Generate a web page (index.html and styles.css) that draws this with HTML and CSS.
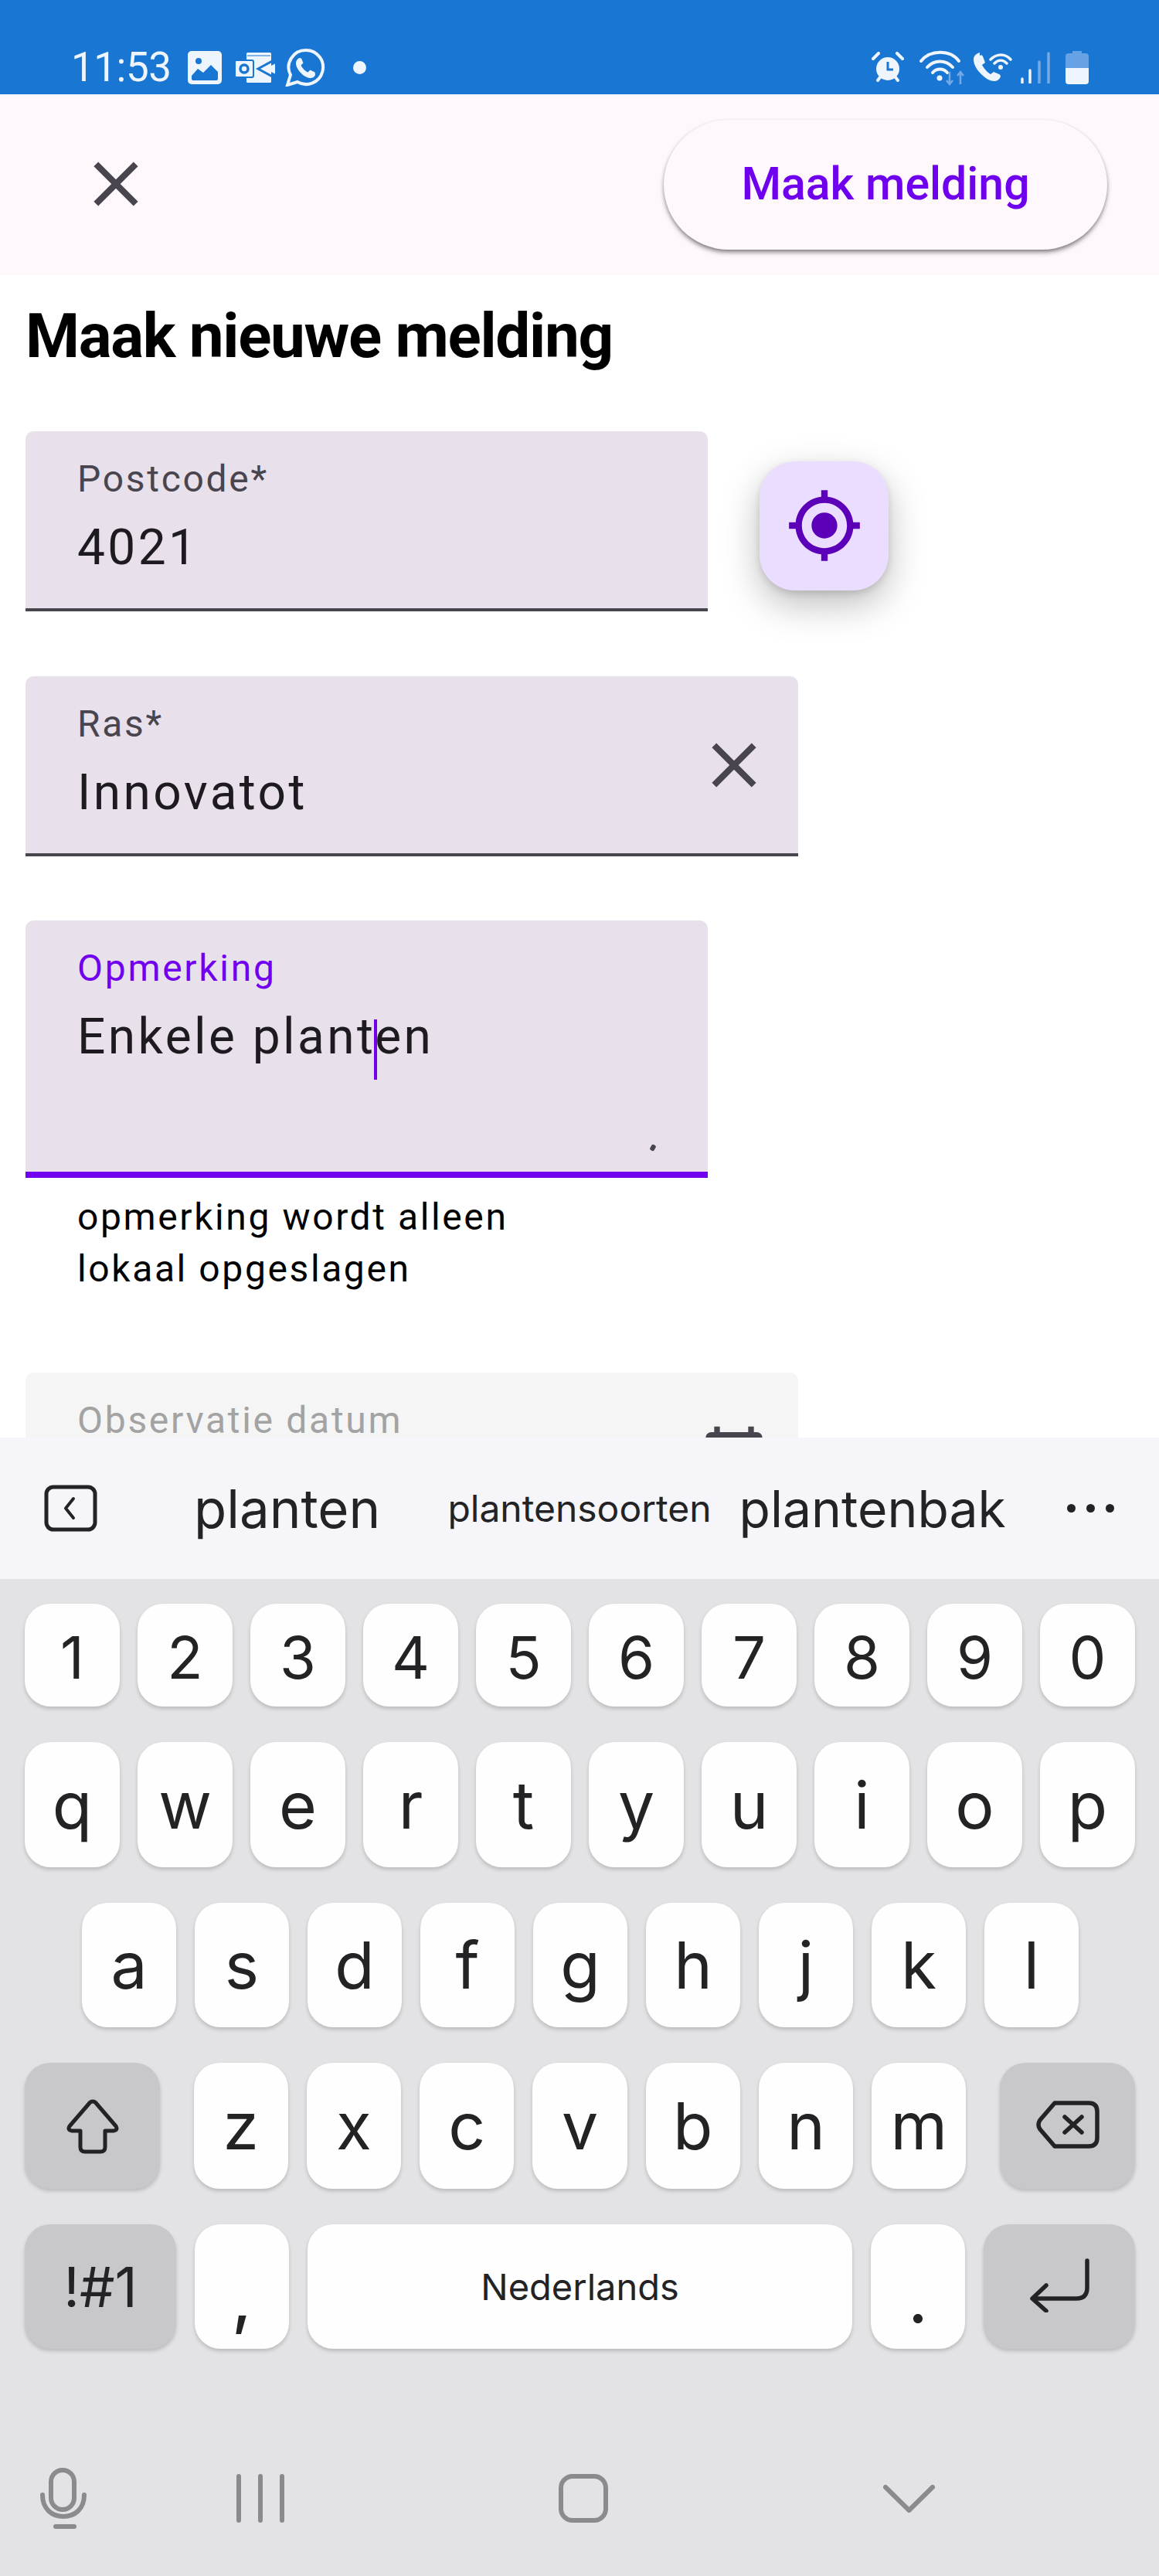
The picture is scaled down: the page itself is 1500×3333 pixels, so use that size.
FILE: index.html
```html
<!DOCTYPE html>
<html lang="nl">
<head>
    <meta charset="UTF-8">
    <meta name="viewport" content="width=device-width, initial-scale=1.0">
    <title>Maak nieuwe melding</title>

    <link rel="stylesheet" href="styles.css">
</head>
<body>

    <div class="phone">
        <!-- Status bar -->
        <div class="status-bar">
            <div class="status-left">
                <span class="clock">11:53</span>
                <svg class="ic-image" viewBox="0 0 44 43"><rect width="44" height="43" rx="5" fill="#eef5fc"/><circle cx="14" cy="13" r="4" fill="#1976d2"/><path d="M5 32 L13 23 L20 28 L30 18 L39 27 V36 Q39 38 37 38 H7 Q5 38 5 36z" fill="#1976d2"/></svg>
                <svg class="ic-outlook" viewBox="0 0 51 39"><rect x="14" y="0" width="32" height="39" rx="1.500" fill="#eef5fc"/><path d="M15 4 H45" stroke="#1976d2" stroke-width="1"/><path d="M51 9 L29 21 L51 33" fill="none" stroke="#1976d2" stroke-width="3"/><path d="M38 21 L51 14.500 V27.500z" fill="#eef5fc"/><path d="M46 0 H51 V9 L46 11z M46 31 L51 33 V39 H46z" fill="#1976d2"/><rect x="-1" y="10" width="24" height="22" rx="2" fill="#eef5fc" stroke="#1976d2" stroke-width="2"/><circle cx="11" cy="21" r="5" fill="none" stroke="#1976d2" stroke-width="3.500"/></svg>
                <svg class="ic-whatsapp" viewBox="0 0 52 50"><path d="M27 3 a22 22 0 1 1 -11 41 L3 48 L7 35 A22 22 0 0 1 27 3z" fill="none" stroke="#eef5fc" stroke-width="4"/><path d="M19 13 c-2 0-5 3-5 7 c0 5 4 10 7 13 c4 4 9 6 12 6 c4 0 6-3 6-5 l-.5-2.500 -6-3 -3 3 c-3-1-7-5-9-9 l3-3 -2.500-6z" fill="#eef5fc"/></svg>
                <span class="status-dot"></span>
            </div>
            <div class="status-right">
                <svg class="ic-alarm" viewBox="0 0 42 40"><circle cx="21" cy="22" r="15" fill="#eef5fc"/><path d="M21 13 V23 H28" fill="none" stroke="#1976d2" stroke-width="3"/><path d="M2 9 L9 2 M40 9 L33 2 M8 37 L11 33 M34 37 L31 33" stroke="#eef5fc" stroke-width="4" stroke-linecap="round"/></svg>
                <svg class="ic-wifi" viewBox="0 0 62 46"><path d="M3 14 C15 -1 41 -1 52 14 M11 22 C20 12 35 12 44 22 M18 29 C23 23 32 23 37 29" fill="none" stroke="#eef5fc" stroke-width="4" stroke-linecap="round"/><circle cx="27" cy="36" r="3.500" fill="#eef5fc"/><path d="M40 28 V44 M36 39 L40 44 L44 39" fill="none" stroke="#75a9e4" stroke-width="2.500"/><path d="M54 44 V28 M50 33 L54 28 L58 33" fill="none" stroke="#75a9e4" stroke-width="2.500"/></svg>
                <svg class="ic-wificall" viewBox="0 0 50 38"><path d="M8 0 c-4 1-8 4-8 9 c0 7 5 14 10 19 c5 5 11 9 17 9 c4 0 7-3 8-6 c0-1-1-3-2-3 l-7-3 -4 3 c-4-2-9-8-11-12 l4-3 -3-8 c-1-2-2-2-4-1z" fill="#eef5fc"/><path d="M22 9 C30 1 41 1 48 9 M27 14 C32 9 38 9 43 14" fill="none" stroke="#eef5fc" stroke-width="3.500" stroke-linecap="round"/><circle cx="35" cy="19" r="3" fill="#eef5fc"/></svg>
                <svg class="ic-signal" viewBox="0 0 38 41"><path d="M2 40 V35" stroke="#eef5fc" stroke-width="3.500" stroke-linecap="round"/><path d="M12 40 V24" stroke="#eef5fc" stroke-width="3.500" stroke-linecap="round"/><path d="M24 40 V13 M36 40 V2" stroke="#75a9e4" stroke-width="3.500" stroke-linecap="round"/></svg>
                <svg class="ic-battery" viewBox="0 0 30 43"><path d="M9 0 H21 V3 H26 Q30 3 30 7 V22 H0 V7 Q0 3 4 3 H9z" fill="#66a2e4"/><path d="M0 22 H30 V39 Q30 43 26 43 H4 Q0 43 0 39z" fill="#eef5fc"/></svg>
            </div>
        </div>

        <!-- Top bar -->
        <div class="app-bar">
            <svg class="ic-close" viewBox="0 0 24 24"><path d="M19 6.410L17.590 5 12 10.590 6.410 5 5 6.410 10.590 12 5 17.590 6.410 19 12 13.410 17.590 19 19 17.590 13.410 12z"/></svg>
            <button class="submit-btn">Maak melding</button>
        </div>

        <!-- Form -->
        <div class="content">
            <h2 class="title">Maak nieuwe melding</h2>

            <div class="postcode-row">
                <div class="field">
                    <div class="field-text">
                        <div class="field-label">Postcode*</div>
                        <div class="field-value">4021</div>
                    </div>
                </div>
                <button class="location-btn">
                    <svg viewBox="0 0 24 24"><path d="M12 8c-2.210 0-4 1.790-4 4s1.790 4 4 4 4-1.790 4-4-1.790-4-4-4zm8.940 3c-.46-4.170-3.770-7.480-7.940-7.940V1h-2v2.060C6.830 3.520 3.520 6.830 3.060 11H1v2h2.060c.46 4.170 3.770 7.480 7.940 7.940V23h2v-2.060c4.170-.46 7.480-3.770 7.940-7.940H23v-2h-2.060zM12 19c-3.870 0-7-3.130-7-7s3.130-7 7-7 7 3.130 7 7-3.130 7-7 7z"/></svg>
                </button>
            </div>

            <div class="field field-wide">
                <div class="field-text">
                    <div class="field-label">Ras*</div>
                    <div class="field-value">Innovatot</div>
                </div>
                <svg class="ic-close" viewBox="0 0 24 24"><path d="M19 6.410L17.590 5 12 10.590 6.410 5 5 6.410 10.590 12 5 17.590 6.410 19 12 13.410 17.590 19 19 17.590 13.410 12z"/></svg>
            </div>

            <div class="field field-focus">
                <div class="field-text">
                    <div class="field-label">Opmerking</div>
                    <div class="field-value">Enkele plant<span class="caret"></span>en</div>
                </div>
                <span class="resize-mark"></span>
            </div>
            <div class="helper">opmerking wordt alleen<br>lokaal opgeslagen</div>

            <div class="field field-wide field-disabled">
                <div class="field-text">
                    <div class="field-label">Observatie datum</div>
                </div>
                <svg class="ic-calendar" viewBox="0 0 24 24"><path d="M20 3h-1V1h-2v2H7V1H5v2H4c-1.100 0-2 .9-2 2v16c0 1.100.9 2 2 2h16c1.100 0 2-.9 2-2V5c0-1.100-.9-2-2-2zm0 18H4V8h16v13z"/></svg>
            </div>
        </div>

        <!-- Keyboard -->
        <div class="keyboard">
            <div class="suggestions">
                <svg class="ic-back" viewBox="0 0 69 61"><rect x="3" y="3" width="63" height="55" rx="9" fill="none" stroke="#232325" stroke-width="5"/><path d="M38 18 L28 30.500 L38 43" fill="none" stroke="#232325" stroke-width="4" stroke-linecap="round" stroke-linejoin="round"/></svg>
                <span class="sug sug-1">planten</span>
                <span class="sug sug-2">plantensoorten</span>
                <span class="sug sug-3">plantenbak</span>
                <span class="sug-more"><i></i><i></i><i></i></span>
            </div>

            <div class="keys">
                <div class="key-row row-num">
                    <div class="key">1</div><div class="key">2</div><div class="key">3</div><div class="key">4</div><div class="key">5</div><div class="key">6</div><div class="key">7</div><div class="key">8</div><div class="key">9</div><div class="key">0</div>
                </div>
                <div class="key-row row-top">
                    <div class="key">q</div><div class="key">w</div><div class="key">e</div><div class="key">r</div><div class="key">t</div><div class="key">y</div><div class="key">u</div><div class="key">i</div><div class="key">o</div><div class="key">p</div>
                </div>
                <div class="key-row row-home">
                    <div class="key">a</div><div class="key">s</div><div class="key">d</div><div class="key">f</div><div class="key">g</div><div class="key">h</div><div class="key">j</div><div class="key">k</div><div class="key">l</div>
                </div>
                <div class="key-row row-shift">
                    <div class="key key-fn key-side">
                        <svg class="ic-shift" viewBox="0 0 70 72"><path d="M35 4 Q32 4 30 7 L5 36 Q2 41 8 42 H19 V63 Q19 69 25 69 H45 Q51 69 51 63 V42 H62 Q68 41 65 36 L40 7 Q38 4 35 4z" fill="none" stroke="#232325" stroke-width="5" stroke-linejoin="round"/></svg>
                    </div>
                    <div class="letters">
                        <div class="key">z</div><div class="key">x</div><div class="key">c</div><div class="key">v</div><div class="key">b</div><div class="key">n</div><div class="key">m</div>
                    </div>
                    <div class="key key-fn key-side">
                        <svg class="ic-delete" viewBox="0 0 82 62"><path d="M24 3 H68 Q79 3 79 14 V48 Q79 59 68 59 H24 L5 37 Q1 31 5 25z" fill="none" stroke="#232325" stroke-width="5.500" stroke-linejoin="round"/><path d="M37 21 L59 41 M59 21 L37 41" stroke="#232325" stroke-width="5.500" stroke-linecap="round"/></svg>
                    </div>
                </div>
                <div class="key-row row-bottom">
                    <div class="key key-fn key-sym">!#1</div>
                    <div class="key key-punct key-small">,</div>
                    <div class="key key-space">Nederlands</div>
                    <div class="key key-punct key-small">.</div>
                    <div class="key key-fn key-sym">
                        <svg class="ic-enter" viewBox="0 0 78 70"><path d="M75 3 V38 Q75 52 61 52 H5 M22 35 L4 52 L22 68" fill="none" stroke="#232325" stroke-width="5.500" stroke-linecap="round" stroke-linejoin="round"/></svg>
                    </div>
                </div>
            </div>

            <div class="nav">
                <svg class="ic-mic" viewBox="0 0 60 79"><rect x="14" y="3" width="30" height="51" rx="15" fill="none" stroke="#8b8b8d" stroke-width="6"/><path d="M3 35 C3 53 15 63 30 63 C45 63 57 53 57 35" fill="none" stroke="#8b8b8d" stroke-width="6" stroke-linecap="round"/><path d="M20 76 H44" stroke="#8b8b8d" stroke-width="6" stroke-linecap="round"/></svg>
                <div class="nav-lines"><i></i><i></i><i></i></div>
                <div class="nav-home"></div>
                <svg class="ic-chevron" viewBox="0 0 67 36"><path d="M3 3 L33.500 33 L64 3" fill="none" stroke="#8b8b8d" stroke-width="6" stroke-linecap="round" stroke-linejoin="round"/></svg>
            </div>
        </div>
    </div>

</body>
</html>
```

FILE: styles.css
```css
* {
    margin: 0;
    padding: 0;
    box-sizing: border-box;
}
body {
    width: 1500px;
    height: 3333px;
    overflow: hidden;
    font-family: 'Roboto', sans-serif;
    background: white;
}
svg {
    display: block;
    flex-shrink: 0;
}
.phone {
    width: 1500px;
    height: 3333px;
    display: flex;
    flex-direction: column;
    overflow: hidden;
}

/* status bar */
.status-bar {
    height: 122px;
    flex-shrink: 0;
    background: #1976d2;
    display: flex;
    justify-content: space-between;
    padding: 62px 91px 0 92px;
}
.status-left, .status-right {
    display: flex;
    align-items: center;
    height: 50px;
}
.clock {
    width: 151px;
    font-size: 53px;
    letter-spacing: -0.5px;
    color: #eef5fc;
}
.ic-image { width: 44px; height: 43px; margin-right: 18px; }
.ic-outlook { width: 51px; height: 39px; margin-right: 13px; }
.ic-whatsapp { width: 52px; height: 50px; margin-right: 36px; }
.status-dot {
    width: 17px;
    height: 17px;
    border-radius: 50%;
    background: #eef5fc;
}
.ic-alarm { width: 42px; height: 40px; margin-right: 19px; }
.ic-wifi { width: 62px; height: 46px; margin-right: 9px; margin-top: 2px; }
.ic-wificall { width: 50px; height: 38px; margin-right: 11px; }
.ic-signal { width: 38px; height: 41px; margin-right: 20px; }
.ic-battery { width: 30px; height: 43px; }

/* top bar */
.app-bar {
    height: 234px;
    flex-shrink: 0;
    background: #fef8fd;
    display: flex;
    justify-content: space-between;
    align-items: center;
    padding: 0 67px 0 101px;
}
.app-bar .ic-close {
    margin-top: -2px;
}
.ic-close {
    width: 98px;
    height: 98px;
    fill: #49454f;
}
.submit-btn {
    width: 574px;
    height: 168px;
    border: none;
    border-radius: 84px;
    padding-bottom: 4px;
    background: #fef8fd;
    color: #6f00ee;
    font-family: 'Roboto', sans-serif;
    font-size: 59px;
    font-weight: 500;
    box-shadow: 0 4px 6px -1px rgba(0, 0, 0, 0.5), 0 1px 4px rgba(0, 0, 0, 0.1);
}

/* form */
.content {
    flex: 1;
    min-height: 0;
    overflow: hidden;
    padding: 32px 33px 0;
}
.title {
    font-size: 80px;
    line-height: 94px;
    font-weight: 700;
    letter-spacing: -1.3px;
    color: black;
    margin-bottom: 76px;
}
.postcode-row {
    display: flex;
    align-items: center;
    gap: 67px;
    margin-bottom: 84px;
}
.field {
    position: relative;
    width: 883px;
    height: 233px;
    flex-shrink: 0;
    background: #e8e0eb;
    border-radius: 10px 10px 0 0;
    border-bottom: 4px solid #49454f;
    padding-left: 67px;
    display: flex;
    justify-content: space-between;
    align-items: center;
}
.field-text {
    align-self: flex-start;
    padding-top: 34px;
}
.field-label {
    font-size: 48px;
    line-height: 56px;
    letter-spacing: 2.7px;
    color: #49454f;
}
.field-value {
    font-size: 64px;
    line-height: 72px;
    letter-spacing: 3.4px;
    color: #1d1b20;
    margin-top: 25px;
}
.field-wide {
    width: 1000px;
    padding-right: 34px;
    margin-bottom: 83px;
}
.field-focus {
    height: 333px;
    border-bottom: 8px solid #7000ee;
}
.field-focus .field-label {
    color: #7000ee;
}
.caret {
    display: inline-block;
    width: 4px;
    height: 78px;
    margin: -30px -3px -17px -2px;
    vertical-align: -17px;
    background: #7000ee;
}
.resize-mark {
    position: absolute;
    right: 68px;
    bottom: 27px;
    width: 6px;
    height: 8px;
    background: #49454f;
    border-radius: 2px;
    transform: rotate(30deg);
}
.helper {
    font-size: 48px;
    line-height: 67px;
    letter-spacing: 2.6px;
    color: black;
    padding: 17px 0 0 67px;
    margin-bottom: 101px;
}
.field-disabled {
    background: #f5f5f5;
    border-bottom: none;
}
.field-disabled .field-label {
    color: #a3a3a3;
}
.ic-calendar {
    width: 88px;
    height: 88px;
    fill: #49454f;
    margin: -13px 5px 0 0;
}
.location-btn {
    width: 167px;
    height: 167px;
    margin-top: 11px;
    border: none;
    border-radius: 46px;
    background: #eaddff;
    display: flex;
    align-items: center;
    justify-content: center;
    box-shadow: 0 18px 48px rgba(0, 0, 0, 0.26), 0 4px 10px rgba(0, 0, 0, 0.12);
}
.location-btn svg {
    width: 100px;
    height: 100px;
    fill: #5b00b8;
}

/* keyboard */
.keyboard {
    height: 1473px;
    flex-shrink: 0;
    background: #e3e3e5;
    font-family: 'Inter', sans-serif;
    color: #232325;
}
.suggestions {
    height: 183px;
    background: #f5f5fa;
    display: flex;
    align-items: center;
    padding-left: 57px;
}
.ic-back { width: 69px; height: 61px; }
.sug { white-space: nowrap; }
.sug-1 { font-size: 69px; margin-left: 125px; }
.sug-2 { font-size: 48px; margin-left: 87px; }
.sug-3 { font-size: 66px; margin-left: 36px; }
.sug-more {
    display: flex;
    gap: 14px;
    margin-left: 79px;
}
.sug-more i {
    width: 11px;
    height: 11px;
    border-radius: 50%;
    background: #232325;
}
.keys {
    padding: 32px 31px 0 32px;
    display: flex;
    flex-direction: column;
    gap: 46px;
}
.key-row {
    display: flex;
    gap: 23px;
}
.key {
    flex: 1;
    display: flex;
    align-items: center;
    justify-content: center;
    background: #fefefe;
    border-radius: 33px;
    font-size: 84px;
    box-shadow: 0 3px 5px rgba(0, 0, 0, 0.18);
}
.row-num { height: 133px; }
.row-num .key { font-size: 76px; padding-top: 4px; }
.row-top { height: 162px; }
.row-home { height: 161px; padding: 0 73px 0 74px; gap: 24px; }
.row-shift { height: 163px; justify-content: space-between; gap: 0; }
.row-bottom { height: 161px; gap: 24px; }
.letters {
    width: 1000px;
    display: flex;
    gap: 24px;
}
.key-fn { background: #c8c8ca; }
.key-side { flex: 0 0 175px; }
.key-sym { flex: 0 0 196px; font-size: 72px; }
.key-small { flex: 0 0 122px; }
.key-space { flex: 1; font-size: 47px; }
.key-punct {
    font-weight: 500;
    align-items: flex-end;
    padding-bottom: 14px;
}
.ic-shift { width: 70px; height: 72px; }
.ic-delete { width: 82px; height: 62px; margin-bottom: 4px; }
.ic-enter { width: 78px; height: 70px; margin-bottom: 4px; }

/* navigation bar */
.nav {
    height: 79px;
    margin-top: 154px;
    display: flex;
    align-items: center;
    padding-left: 52px;
}
.ic-mic { width: 60px; height: 79px; }
.nav-lines {
    width: 62px;
    height: 63px;
    margin-left: 194px;
    display: flex;
    justify-content: space-between;
}
.nav-lines i {
    width: 6px;
    height: 63px;
    border-radius: 3px;
    background: #8b8b8d;
}
.nav-home {
    width: 64px;
    height: 63px;
    margin-left: 355px;
    border: 6px solid #8b8b8d;
    border-radius: 18px;
}
.ic-chevron {
    width: 67px;
    height: 36px;
    margin-left: 356px;
}
```
